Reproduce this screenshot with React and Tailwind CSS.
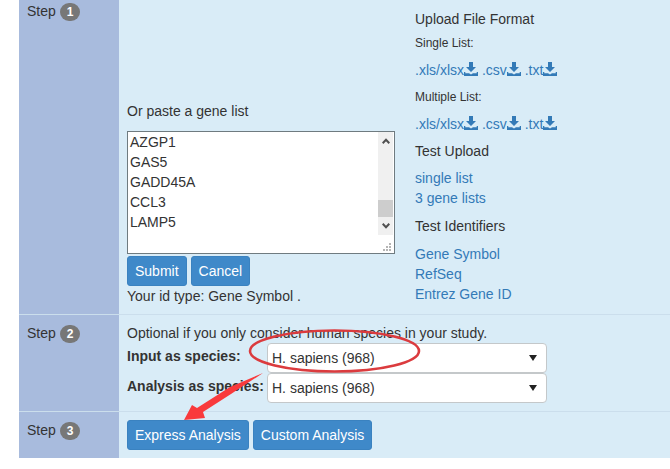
import { useState } from "react";

const FILE_TYPES = [".xls/xlsx", ".csv", ".txt"];
const SPECIES = ["H. sapiens (968)"];
const GENES = ["AZGP1", "GAS5", "GADD45A", "CCL3", "LAMP5"];

function DownloadIcon() {
  return (
    <svg viewBox="0 0 14 14" className="inline-block h-3.5 w-3.5 align-[-1px]" fill="currentColor" aria-hidden="true">
      <path d="M5 0h4v5h3L7 10 2 5h3z" />
      <path d="M0 10h1.300v1.200H5l2 1.300 2-1.300h3.700V10H14v4H0z" />
    </svg>
  );
}

function Button({ children, ...props }) {
  return (
    <button
      type="button"
      className="h-[30px] rounded-[3px] border border-[#3a82c0] bg-[#3f89c9] px-[7px] text-white hover:bg-[#3071a9]"
      {...props}
    >
      {children}
    </button>
  );
}

function Link({ children }) {
  return (
    <a href="#" className="text-[#337ab7] hover:underline">
      {children}
    </a>
  );
}

function FileLinks() {
  return (
    <p className="mt-[7px]">
      {FILE_TYPES.map((type) => (
        <span key={type}>
          <Link>
            {type}
            <DownloadIcon />
          </Link>{" "}
        </span>
      ))}
    </p>
  );
}

function StepRow({ number, first, children }) {
  return (
    <section className={first ? "flex" : "flex border-t border-[#cbdeec]"}>
      <div className={`w-[100px] shrink-0 bg-[#a8bbdd] px-2 ${first ? "pt-px" : "pt-2"}`}>
        Step{" "}
        <span className="inline-block rounded-[10px] bg-[#777] px-[7px] py-[3px] align-middle text-xs leading-3 font-bold text-white">
          {number}
        </span>
      </div>
      <div className={`relative min-w-0 flex-1 px-2 pb-2 ${first ? "pt-[9px]" : "pt-2"}`}>{children}</div>
    </section>
  );
}

function SpeciesSelect({ id, label }) {
  return (
    <div className="flex">
      <label htmlFor={id} className="w-[140px] shrink-0 pt-[3px] font-bold whitespace-nowrap">
        {label}
      </label>
      <div className="relative w-[280px]">
        <select
          id={id}
          className="block h-[30px] w-full appearance-none rounded-[4px] border border-[#c4c8ca] bg-white px-1 text-[#333]"
        >
          {SPECIES.map((name) => (
            <option key={name}>{name}</option>
          ))}
        </select>
        <svg
          viewBox="0 0 8 6"
          className="pointer-events-none absolute top-3 right-2.5 h-1.5 w-2"
          fill="#222"
          aria-hidden="true"
        >
          <path d="M0 0h8L4 6z" />
        </svg>
      </div>
    </div>
  );
}

function ScrollTrack() {
  return (
    <div className="flex w-4 shrink-0 flex-col pr-px" aria-hidden="true">
      <div className="flex h-[103px] flex-col items-center justify-between bg-[#f0f0f0] py-1.5">
        <svg viewBox="0 0 8 6" className="h-1.5 w-2" fill="none" stroke="#505050" strokeWidth="2">
          <path d="M.7 5.2 4 1.7l3.3 3.5" />
        </svg>
        <div className="mt-auto mb-1.5 h-[17px] w-full bg-[#cdcdcd]" />
        <svg viewBox="0 0 8 6" className="h-1.5 w-2" fill="none" stroke="#505050" strokeWidth="2">
          <path d="M.7.8 4 4.3 7.3.8" />
        </svg>
      </div>
      <svg viewBox="0 0 8 8" className="mt-2 ml-auto mr-0.5 h-2 w-2" fill="#b5b5b5">
        <path d="M6 0h2v2H6zM3 3h2v2H3zM6 3h2v2H6zM0 6h2v2H0zM3 6h2v2H3zM6 6h2v2H6z" />
      </svg>
    </div>
  );
}

// hand-drawn marker: circles the input species and points at Express Analysis
function Marker() {
  return (
    <svg
      viewBox="0 0 310 110"
      className="pointer-events-none absolute top-0 left-0 z-10 h-[110px] w-[310px]"
      aria-hidden="true"
    >
      <ellipse cx="215.5" cy="36" rx="84.5" ry="20.5" fill="none" stroke="#db3b3e" strokeWidth="2.6" />
      <path d="M65 105 73 90l5 3 33-21 33-14-32 21-28 18 2 6z" fill="#f93a3c" />
    </svg>
  );
}

export default function App() {
  const [genes, setGenes] = useState(GENES.join("\n"));

  return (
    <main className="bg-white pl-[19px] font-['Liberation_Sans',Arial,sans-serif] text-sm leading-5 text-[#333]">
      <div className="bg-[#d9ecf7]">
        <StepRow number={1} first>
          <div className="flex items-end gap-5">
            <div className="w-[268px] shrink-0">
              <label htmlFor="genes" className="block">
                Or paste a gene list
              </label>
              <div className="mt-2.5 flex h-[123px] border border-[#6f7b80] bg-white">
                <textarea
                  id="genes"
                  value={genes}
                  onChange={(e) => setGenes(e.target.value)}
                  className="block min-w-0 flex-1 resize-none overflow-hidden px-0.5 outline-none"
                />
                <ScrollTrack />
              </div>
              <div className="mt-0.5 flex gap-1">
                <Button>Submit</Button>
                <Button onClick={() => setGenes("")}>Cancel</Button>
              </div>
              <p>Your id type: Gene Symbol .</p>
            </div>

            <div className="flex-1 self-start pb-0.5">
              <h5>Upload File Format</h5>
              <h6 className="mt-1 text-xs leading-5">Single List:</h6>
              <FileLinks />
              <h6 className="mt-[7px] text-xs leading-5">Multiple List:</h6>
              <FileLinks />
              <h5 className="mt-[7px]">Test Upload</h5>
              <ul className="mt-[7px]">
                <li><Link>single list</Link></li>
                <li><Link>3 gene lists</Link></li>
              </ul>
              <h5 className="mt-2">Test Identifiers</h5>
              <ul className="mt-2">
                <li><Link>Gene Symbol</Link></li>
                <li><Link>RefSeq</Link></li>
                <li><Link>Entrez Gene ID</Link></li>
              </ul>
            </div>
          </div>
        </StepRow>

        <StepRow number={2}>
          <p>Optional if you only consider human species in your study.</p>
          <SpeciesSelect id="input-species" label="Input as species:" />
          <SpeciesSelect id="analysis-species" label="Analysis as species:" />
          <Marker />
        </StepRow>

        <StepRow number={3}>
          <div className="flex gap-1">
            <Button>Express Analysis</Button>
            <Button>Custom Analysis</Button>
          </div>
        </StepRow>
      </div>
    </main>
  );
}
